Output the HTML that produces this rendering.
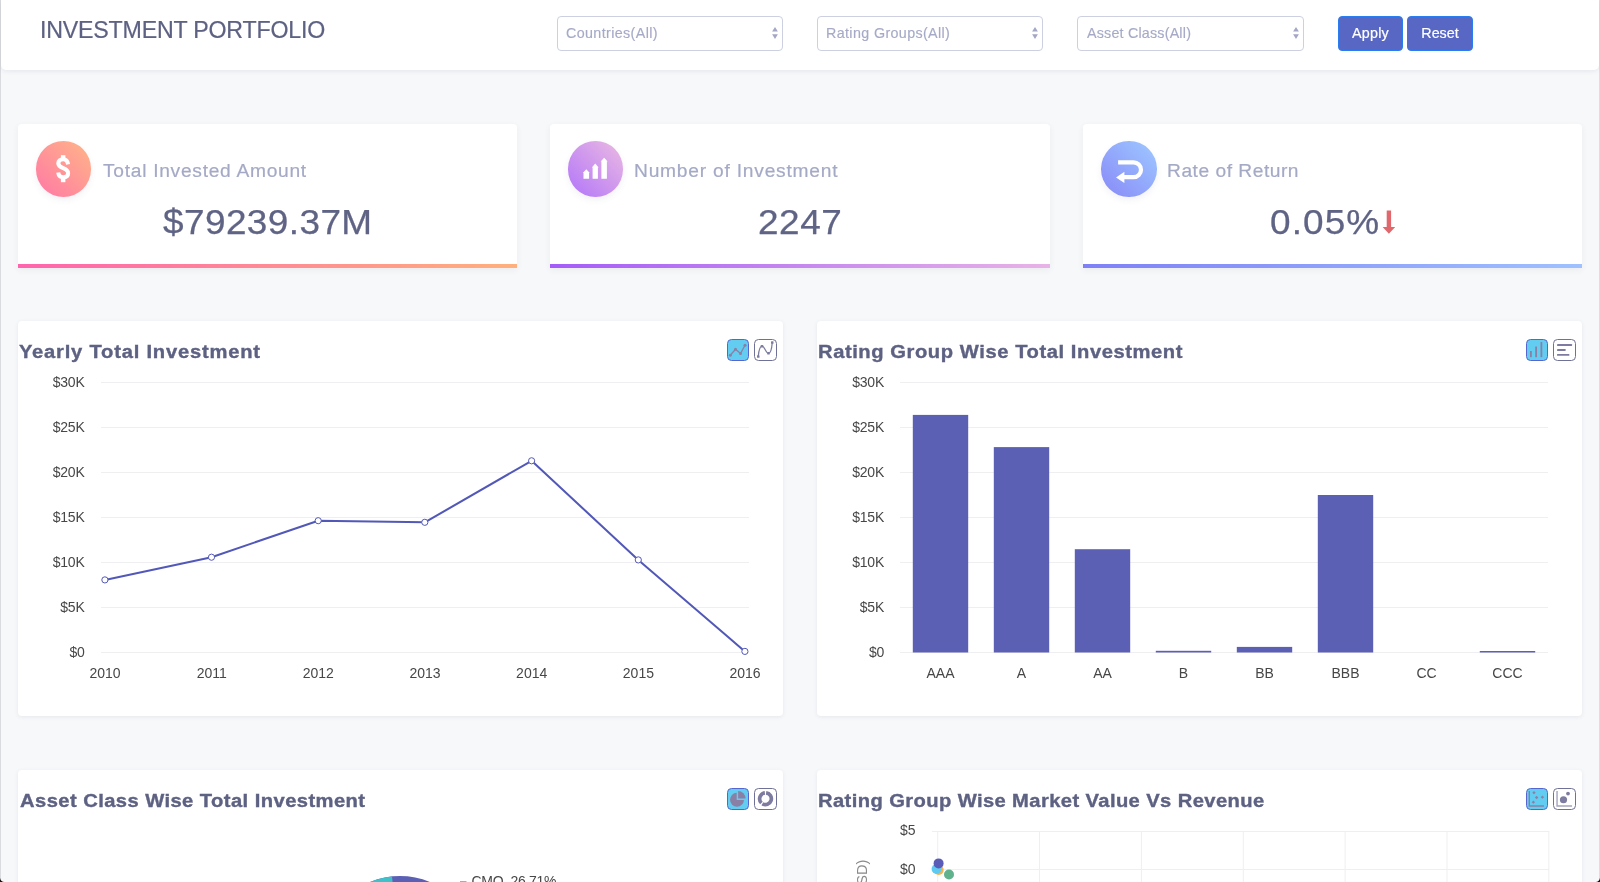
<!DOCTYPE html>
<html lang="en">
<head>
<meta charset="utf-8">
<title>Investment Portfolio</title>
<style>
*{box-sizing:border-box;margin:0;padding:0}
html,body{width:1600px;height:882px;overflow:hidden}
body{background:#f7f8fa;font-family:"Liberation Sans",sans-serif;position:relative;color:#5d6182}
.abs{position:absolute}
.ttl,.sel span,.btn,.kpi .lab,.kpi .val{will-change:transform}
#ov{will-change:transform}
.edgeL{left:0;top:0;width:1px;height:882px;background:#d9dbdf}
.edgeR{left:1599px;top:0;width:1px;height:882px;background:#dcdee2}
.hdr{left:1px;top:0;width:1598px;height:70px;background:#fff;border-radius:0 0 5px 5px;box-shadow:0 1px 5px rgba(60,64,90,.10)}
.ttl{left:40.3px;top:15px;font-size:23.2px;line-height:30px;color:#5d6182;-webkit-text-stroke:.2px #5d6182;letter-spacing:-.2px;white-space:nowrap}
.sel{top:15.5px;width:226px;height:35px;border:1px solid #cdd0e0;border-radius:4px;background:#fff}
.sel span{-webkit-text-stroke:.15px #a5aac7;position:absolute;left:9px;top:8.5px;font-size:14.3px;line-height:17px;color:#a5aac7;white-space:nowrap;letter-spacing:.35px}
.sel svg{position:absolute;right:3.2px;top:10.7px}
.btn{top:15.7px;height:34.9px;-webkit-text-stroke:.2px #fff;background:#5867c3;border:1px solid #2a7df0;border-radius:4px;color:#fff;font-size:14.3px;line-height:32px;text-align:center;letter-spacing:.3px}
.kpi{top:123.5px;height:144.5px;background:#fff;border-radius:4px 4px 0 0;box-shadow:0 2px 6px rgba(60,64,90,.07)}
.kpi .bar{position:absolute;left:0;bottom:0;width:100%;height:4px}
.kpi .ic{position:absolute;top:17.6px;width:55.6px;height:55.6px;border-radius:50%;box-shadow:0 3px 6px rgba(90,90,140,.08)}
.kpi .lab{-webkit-text-stroke:.2px #a4a9c6;position:absolute;top:35px;font-size:19.2px;line-height:24px;color:#a4a9c6;white-space:nowrap;letter-spacing:.6px}
.kpi .val{-webkit-text-stroke:.25px #5f6384;position:absolute;top:77px;font-size:34.5px;line-height:42px;color:#5f6384;white-space:nowrap;letter-spacing:.9px;transform:scaleX(1.07);transform-origin:0 0}
.card{background:#fff;border-radius:4px;box-shadow:0 1px 4px rgba(60,64,90,.09)}
.card h3{position:absolute;left:1px;top:19.2px;font-size:18px;line-height:24px;font-weight:bold;color:#5d6182;white-space:nowrap;letter-spacing:.7px;transform:scaleX(1.12);transform-origin:0 0;-webkit-text-stroke:.35px #5d6182;will-change:transform}
.tg{position:absolute;width:22px;height:22px;border-radius:4.5px;border:1.5px solid #6f7197;background:#fff}
.tg.on{background:#63cdf1;border-color:#5566cf}
.tg svg{position:absolute;left:-1.5px;top:-1.5px}
svg text{font-family:"Liberation Sans",sans-serif}
</style>
</head>
<body>
<div class="abs edgeL"></div>
<div class="abs edgeR"></div>

<!-- HEADER -->
<div class="abs hdr"></div>
<div class="abs ttl" id="t_title">INVESTMENT PORTFOLIO</div>

<div class="abs sel" style="left:557px"><span id="t_s1" style="left:8.4px;letter-spacing:.38px">Countries(All)</span>
<svg width="8" height="13" viewBox="0 0 8 13"><path d="M4 0L6.9 4.6H1.1Z M1.1 7.2H6.9L4 12Z" fill="#a3a6c4"/></svg></div>
<div class="abs sel" style="left:817px"><span id="t_s2" style="left:8.2px;letter-spacing:.37px">Rating Groups(All)</span>
<svg width="8" height="13" viewBox="0 0 8 13"><path d="M4 0L6.9 4.6H1.1Z M1.1 7.2H6.9L4 12Z" fill="#a3a6c4"/></svg></div>
<div class="abs sel" style="left:1077px;width:227px"><span id="t_s3" style="left:9.2px;letter-spacing:.2px">Asset Class(All)</span>
<svg width="8" height="13" viewBox="0 0 8 13"><path d="M4 0L6.9 4.6H1.1Z M1.1 7.2H6.9L4 12Z" fill="#a3a6c4"/></svg></div>

<div class="abs btn" style="letter-spacing:.2px;left:1338px;width:65px" id="t_b1">Apply</div>
<div class="abs btn" style="letter-spacing:0px;left:1407px;width:66px" id="t_b2">Reset</div>

<!-- KPI CARDS -->
<div class="abs kpi" style="left:18px;width:499px">
  <div class="ic" style="left:17.6px;background:linear-gradient(45deg,#ff7ea3 10%,#ffb08a 90%)"></div>
  <div class="lab" style="left:84.9px;letter-spacing:.72px" id="t_k1">Total Invested Amount</div>
  <div class="val" style="left:145px;letter-spacing:.4px" id="t_v1">$79239.37M</div>
  <div class="bar" style="background:linear-gradient(90deg,#ff64ad,#ffb07c)"></div>
</div>
<div class="abs kpi" style="left:550px;width:500px">
  <div class="ic" style="left:17.8px;background:linear-gradient(45deg,#b77bf7 10%,#e6b4e4 90%)"></div>
  <div class="lab" style="left:83.8px;letter-spacing:.78px" id="t_k2">Number of Investment</div>
  <div class="val" style="left:207.8px;letter-spacing:.5px" id="t_v2">2247</div>
  <div class="bar" style="background:linear-gradient(90deg,#a45cf8,#e8b3e6)"></div>
</div>
<div class="abs kpi" style="left:1083px;width:499px">
  <div class="ic" style="left:18.2px;background:linear-gradient(45deg,#8a8ff8 10%,#9cc3ff 90%)"></div>
  <div class="lab" style="left:83.5px;letter-spacing:.52px" id="t_k3">Rate of Return</div>
  <div class="val" style="left:187.4px;letter-spacing:1.04px" id="t_v3">0.05%</div>
  <div class="bar" style="background:linear-gradient(90deg,#7f80f6,#9fc1ff)"></div>
</div>

<!-- CHART CARDS -->
<div class="abs card" style="left:18px;top:321px;width:765px;height:395px">
  <h3 id="t_h1">Yearly Total Investment</h3>
  <div class="tg on" style="left:709px;top:18px"></div>
  <div class="tg" style="left:736.2px;top:18px;width:22.4px"></div>
</div>
<div class="abs card" style="left:817px;top:321px;width:765px;height:395px">
  <h3 id="t_h2" style="letter-spacing:.51px">Rating Group Wise Total Investment</h3>
  <div class="tg on" style="left:709px;top:18px"></div>
  <div class="tg" style="left:736.2px;top:18px;width:22.4px"></div>
</div>
<div class="abs card" style="left:18px;top:769.5px;width:765px;height:395px">
  <h3 id="t_h3" style="letter-spacing:.39px;left:1.5px">Asset Class Wise Total Investment</h3>
  <div class="tg on" style="left:709px;top:18px"></div>
  <div class="tg" style="left:736.2px;top:18px;width:22.4px"></div>
</div>
<div class="abs card" style="left:817px;top:769.5px;width:765px;height:395px">
  <h3 id="t_h4" style="letter-spacing:.36px">Rating Group Wise Market Value Vs Revenue</h3>
  <div class="tg on" style="left:709px;top:18px"></div>
  <div class="tg" style="left:736.2px;top:18px;width:22.4px"></div>
</div>

<!-- OVERLAY SVG FOR CHARTS & ICONS -->
<svg class="abs" id="ov" style="left:0;top:0" width="1600" height="882" viewBox="0 0 1600 882">
<path fill="none" stroke="#fff" stroke-width="4.1" d="M68.1 164.4C67.6 161 65.6 159.3 63.1 159.3C60.2 159.3 58.3 160.9 58.3 163.2C58.3 165.9 60.4 167.1 63.2 168.2C66 169.3 68.1 170.6 68.1 173.3C68.1 175.8 66.2 177.3 63.2 177.3C60.3 177.3 58.6 175.6 58.2 172.6"/>
<rect x="60.9" y="155.2" width="4.5" height="3.4" fill="#fff"/><rect x="60.9" y="178" width="4.5" height="4.2" fill="#fff"/>
<path fill="#fff" d="M583.5 178.7V172.99999999999997H582.8L586.3 169.2L589.8 172.99999999999997H589.0999999999999V178.7ZM592.6 178.7V167.39999999999998H591.9L595.25 163.6L598.6 167.39999999999998H597.9V178.7ZM601.4000000000001 178.7V161.6H600.7L604.1500000000001 157.8L607.6 161.6H606.9V178.7Z"/>
<path fill="none" stroke="#fff" stroke-width="4.2" d="M1118.1 162.4H1133.6A7.4 7.4 0 0 1 1133.6 177.2H1123.5"/>
<path fill="#fff" d="M1116 177.4L1124.4 171.8V182.9Z"/>
<path fill="#e0686d" d="M1386.7 210.5H1391.1V226.9H1395.2L1388.9 233.8L1382.6 226.9H1386.7Z"/>
<rect x="101" y="382" width="648" height="1" fill="#efeff1"/>
<rect x="101" y="427" width="648" height="1" fill="#efeff1"/>
<rect x="101" y="472" width="648" height="1" fill="#efeff1"/>
<rect x="101" y="517" width="648" height="1" fill="#efeff1"/>
<rect x="101" y="562" width="648" height="1" fill="#efeff1"/>
<rect x="101" y="607" width="648" height="1" fill="#efeff1"/>
<rect x="101" y="652" width="648" height="1" fill="#efeff1"/>
<text x="84.6" y="386.8" font-size="14" fill="#474747" text-anchor="end" letter-spacing="-.2">$30K</text>
<text x="84.6" y="431.8" font-size="14" fill="#474747" text-anchor="end" letter-spacing="-.2">$25K</text>
<text x="84.6" y="476.8" font-size="14" fill="#474747" text-anchor="end" letter-spacing="-.2">$20K</text>
<text x="84.6" y="521.8" font-size="14" fill="#474747" text-anchor="end" letter-spacing="-.2">$15K</text>
<text x="84.6" y="566.8" font-size="14" fill="#474747" text-anchor="end" letter-spacing="-.2">$10K</text>
<text x="84.6" y="611.8" font-size="14" fill="#474747" text-anchor="end" letter-spacing="-.2">$5K</text>
<text x="84.6" y="656.8" font-size="14" fill="#474747" text-anchor="end" letter-spacing="-.2">$0</text>
<polyline fill="none" stroke="#5258b8" stroke-width="2" stroke-linejoin="round" points="104.9,579.9 211.5,557.2 318.2,520.7 424.8,522.3 531.6,460.8 638.3,559.9 744.9,651.4"/>
<circle cx="104.9" cy="579.9" r="3.1" fill="#fff" stroke="#5258b8" stroke-width="1"/>
<circle cx="211.5" cy="557.2" r="3.1" fill="#fff" stroke="#5258b8" stroke-width="1"/>
<circle cx="318.2" cy="520.7" r="3.1" fill="#fff" stroke="#5258b8" stroke-width="1"/>
<circle cx="424.8" cy="522.3" r="3.1" fill="#fff" stroke="#5258b8" stroke-width="1"/>
<circle cx="531.6" cy="460.8" r="3.1" fill="#fff" stroke="#5258b8" stroke-width="1"/>
<circle cx="638.3" cy="559.9" r="3.1" fill="#fff" stroke="#5258b8" stroke-width="1"/>
<circle cx="744.9" cy="651.4" r="3.1" fill="#fff" stroke="#5258b8" stroke-width="1"/>
<text x="105.0" y="677.6" font-size="14" fill="#474747" text-anchor="middle">2010</text>
<text x="211.7" y="677.6" font-size="14" fill="#474747" text-anchor="middle">2011</text>
<text x="318.3" y="677.6" font-size="14" fill="#474747" text-anchor="middle">2012</text>
<text x="425.0" y="677.6" font-size="14" fill="#474747" text-anchor="middle">2013</text>
<text x="531.7" y="677.6" font-size="14" fill="#474747" text-anchor="middle">2014</text>
<text x="638.4" y="677.6" font-size="14" fill="#474747" text-anchor="middle">2015</text>
<text x="745.0" y="677.6" font-size="14" fill="#474747" text-anchor="middle">2016</text>
<rect x="900" y="382" width="648" height="1" fill="#efeff1"/>
<rect x="900" y="427" width="648" height="1" fill="#efeff1"/>
<rect x="900" y="472" width="648" height="1" fill="#efeff1"/>
<rect x="900" y="517" width="648" height="1" fill="#efeff1"/>
<rect x="900" y="562" width="648" height="1" fill="#efeff1"/>
<rect x="900" y="607" width="648" height="1" fill="#efeff1"/>
<rect x="900" y="652" width="648" height="1" fill="#efeff1"/>
<text x="884.1" y="386.8" font-size="14" fill="#474747" text-anchor="end" letter-spacing="-.2">$30K</text>
<text x="884.1" y="431.8" font-size="14" fill="#474747" text-anchor="end" letter-spacing="-.2">$25K</text>
<text x="884.1" y="476.8" font-size="14" fill="#474747" text-anchor="end" letter-spacing="-.2">$20K</text>
<text x="884.1" y="521.8" font-size="14" fill="#474747" text-anchor="end" letter-spacing="-.2">$15K</text>
<text x="884.1" y="566.8" font-size="14" fill="#474747" text-anchor="end" letter-spacing="-.2">$10K</text>
<text x="884.1" y="611.8" font-size="14" fill="#474747" text-anchor="end" letter-spacing="-.2">$5K</text>
<text x="884.1" y="656.8" font-size="14" fill="#474747" text-anchor="end" letter-spacing="-.2">$0</text>
<rect x="912.8" y="414.9" width="55.4" height="237.6" fill="#5c60b4"/>
<text x="940.5" y="677.6" font-size="14" fill="#474747" text-anchor="middle">AAA</text>
<rect x="993.8" y="447.1" width="55.4" height="205.4" fill="#5c60b4"/>
<text x="1021.5" y="677.6" font-size="14" fill="#474747" text-anchor="middle">A</text>
<rect x="1074.8" y="549.2" width="55.4" height="103.3" fill="#5c60b4"/>
<text x="1102.5" y="677.6" font-size="14" fill="#474747" text-anchor="middle">AA</text>
<rect x="1155.8" y="650.8" width="55.4" height="1.7" fill="#5c60b4"/>
<text x="1183.5" y="677.6" font-size="14" fill="#474747" text-anchor="middle">B</text>
<rect x="1236.8" y="646.9" width="55.4" height="5.6" fill="#5c60b4"/>
<text x="1264.5" y="677.6" font-size="14" fill="#474747" text-anchor="middle">BB</text>
<rect x="1317.8" y="495" width="55.4" height="157.5" fill="#5c60b4"/>
<text x="1345.5" y="677.6" font-size="14" fill="#474747" text-anchor="middle">BBB</text>
<text x="1426.5" y="677.6" font-size="14" fill="#474747" text-anchor="middle">CC</text>
<rect x="1479.8" y="651" width="55.4" height="1.5" fill="#5c60b4"/>
<text x="1507.5" y="677.6" font-size="14" fill="#474747" text-anchor="middle">CCC</text>
<g><clipPath id="cp"><rect x="0" y="0" width="1600" height="882"/></clipPath>
<circle cx="400" cy="954" r="78" fill="#5c60b4"/>
<path d="M400 954L392 876.4A78 78 0 0 0 330 920Z" fill="#3fc1c9"/>
</g>
<rect x="460" y="881" width="6.5" height="1" fill="#aaa"/>
<text x="471.5" y="886.2" font-size="14" fill="#474747" letter-spacing="-.3">CMO, 26.71%</text>
<rect x="932" y="831" width="617" height="1" fill="#efeff1"/>
<rect x="932" y="869" width="617" height="1" fill="#efeff1"/>
<rect x="937.2" y="831" width="1" height="60" fill="#efeff1"/>
<rect x="1039.0" y="831" width="1" height="60" fill="#efeff1"/>
<rect x="1140.9" y="831" width="1" height="60" fill="#efeff1"/>
<rect x="1242.8" y="831" width="1" height="60" fill="#efeff1"/>
<rect x="1344.6" y="831" width="1" height="60" fill="#efeff1"/>
<rect x="1446.5" y="831" width="1" height="60" fill="#efeff1"/>
<rect x="1548.3" y="831" width="1" height="60" fill="#efeff1"/>
<text x="915.6" y="835.1" font-size="14" fill="#474747" text-anchor="end">$5</text>
<text x="915.6" y="873.8" font-size="14" fill="#474747" text-anchor="end">$0</text>
<text transform="translate(866.8,900) rotate(-90)" font-size="14.5" fill="#8a8a8a">(USD)</text>
<circle cx="938.7" cy="870" r="5" fill="#f6b352"/>
<circle cx="936.6" cy="869" r="5" fill="#5fc9ef"/>
<circle cx="938.6" cy="863.4" r="5" fill="#5a5cb8"/>
<circle cx="949" cy="874.5" r="5" fill="#5fb28c"/>
<polyline fill="none" stroke="#8a80a6" stroke-width="1.3" points="730.25,355.25 735.5,349.25 740.5,353.5 745.0,345.25"/>
<circle cx="730.25" cy="355.25" r="1.5" fill="#8a80a6"/>
<circle cx="735.5" cy="349.25" r="1.5" fill="#8a80a6"/>
<circle cx="740.5" cy="353.5" r="1.5" fill="#8a80a6"/>
<circle cx="745.0" cy="345.25" r="1.5" fill="#8a80a6"/>
<path fill="none" stroke="#7d7ca0" stroke-width="1.3" d="M758.25 356.5C759.0 348 760.5 346.1 762.1 346.1C764.5 346.1 766.0 353.4 768.5 353.4C771.0 353.4 771.8 348 772.25 342.5"/>
<rect x="757.0" y="355.25" width="2.5" height="2.5" rx="0.6" fill="#7d7ca0"/>
<rect x="760.75" y="345.0" width="2.5" height="2.5" rx="0.6" fill="#7d7ca0"/>
<rect x="767.25" y="352.0" width="2.5" height="2.5" rx="0.6" fill="#7d7ca0"/>
<rect x="771.0" y="341.25" width="2.5" height="2.5" rx="0.6" fill="#7d7ca0"/>
<rect x="1530.0" y="351" width="1.8" height="6.2" fill="#8a80a6"/>
<rect x="1535.2" y="346.5" width="1.8" height="10.7" fill="#8a80a6"/>
<rect x="1540.5" y="342" width="1.8" height="15.2" fill="#8a80a6"/>
<rect x="1557.05" y="344" width="15" height="2" rx=".4" fill="#7d7ca0"/>
<rect x="1557.05" y="349" width="8.6" height="1.9" rx=".4" fill="#7d7ca0"/>
<rect x="1557.05" y="353.9" width="12.3" height="1.9" rx=".4" fill="#7d7ca0"/>
<path fill="#8a80a6" d="M736.7 792.75A7 7 0 1 0 744.0 800.05H736.7Z"/>
<path fill="#8a80a6" d="M738.1 791.0A7.5 7.5 0 0 1 745.6 798.5H738.1Z"/>
<path fill="#7d7ca0" d="M766.30 791.09A7.7 7.7 0 1 1 761.42 805.28L763.38 802.14A4.0 4.0 0 1 0 765.92 794.77ZM760.15 804.29A7.7 7.7 0 0 1 764.70 791.09L765.08 794.77A4.0 4.0 0 0 0 762.72 801.63Z"/>
<path fill="none" stroke="#8a80a6" stroke-width="1.4" d="M1529.3 790.95V806.05H1544"/>
<path fill="#8a80a6" d="M1534 790.9499999999999L1535.7 792.65L1534 794.35L1532.3 792.65Z"/>
<path fill="#8a80a6" d="M1536.6 795.8L1538.3 797.5L1536.6 799.2L1534.8999999999999 797.5Z"/>
<path fill="#8a80a6" d="M1542.4 795.4499999999999L1544.1000000000001 797.15L1542.4 798.85L1540.7 797.15Z"/>
<path fill="#8a80a6" d="M1533.35 800.4499999999999L1535.05 802.15L1533.35 803.85L1531.6499999999999 802.15Z"/>
<path fill="none" stroke="#a3a4bf" stroke-width="1.4" d="M1557.05 790.95V806.05H1572.05"/>
<circle cx="1563.5" cy="799.75" r="3.6" fill="#7d7ca0"/>
<circle cx="1568.0" cy="793.6" r="1.9" fill="#7d7ca0"/>
<path fill="#1c1512" d="M1600 877.5V882H1595.5A4.5 4.5 0 0 0 1600 877.5Z M0 877.5V882H4.5A4.5 4.5 0 0 1 0 877.5Z"/>
</svg>
</body>
</html>
